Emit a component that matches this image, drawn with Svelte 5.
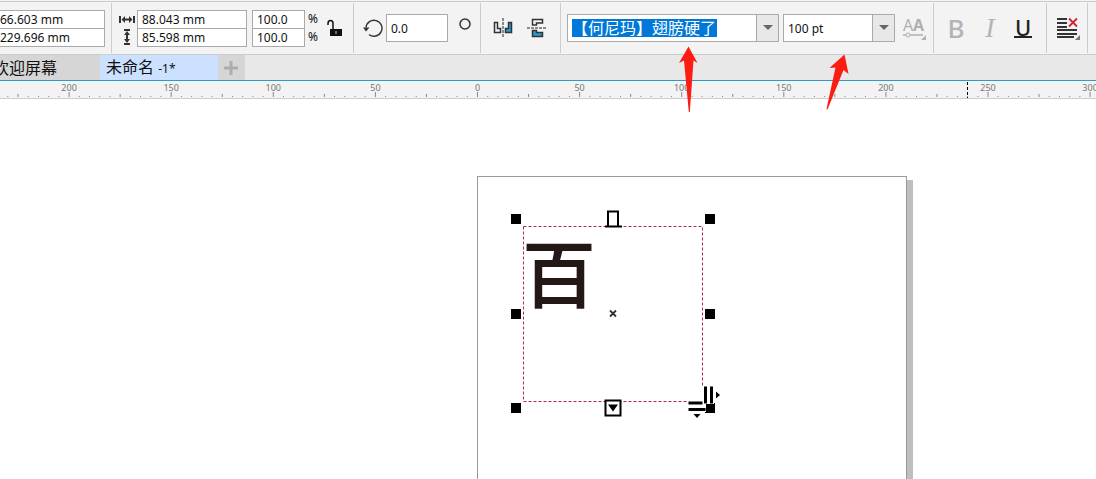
<script>
    let posX = "66.603 mm";
    let posY = "229.696 mm";
    let width = "88.043 mm";
    let height = "85.598 mm";
    let scaleX = "100.0";
    let scaleY = "100.0";
    let angle = "0.0";
    let fontName = "【何尼玛】翅膀硬了";
    let fontSize = "100 pt";

    // ruler: origin and pixels per 5mm
    const origin = 477.5;
    const step = 10.21;
    const ticks = [];
    for (let i = -50; i <= 150; i++) {
        ticks.push({
            x: origin + i * step,
            size: i % 10 == 0 ? 5 : i % 5 == 0 ? 3 : 1,
            label: i % 10 == 0 ? Math.abs(i * 5) : null
        });
    }

    const handles = [
        [511, 214], [705, 214],
        [511, 309], [705, 309],
        [511, 403], [705, 403]
    ];
</script>

<div class="app">
    <header class="toolbar">
        <div class="group position">
            <div class="pair">
                <input aria-label="X" bind:value={posX} />
                <input aria-label="Y" bind:value={posY} />
            </div>
        </div>

        <div class="group size">
            <div class="pair icons">
                <svg width="16" height="18" viewBox="0 0 16 18" stroke="#333" fill="#333">
                    <path d="M1 6v7M15 6v7" stroke-width="2" />
                    <path d="M4 9.5h8" stroke-width="2" />
                    <path d="M2.5 9.5l3.500-3.500v7zM13.5 9.5l-3.500-3.500v7z" stroke="none" />
                </svg>
                <svg width="16" height="18" viewBox="0 0 16 18" stroke="#333" fill="#333">
                    <path d="M5 2h6M5 16h6" stroke-width="2" />
                    <path d="M8 5v8" stroke-width="2" />
                    <path d="M8 3l-3 4h6zM8 15l-3-4h6z" stroke="none" />
                </svg>
            </div>
            <div class="pair">
                <input aria-label="宽度" bind:value={width} />
                <input aria-label="高度" bind:value={height} />
            </div>
            <div class="pair scale">
                <input aria-label="水平缩放" bind:value={scaleX} />
                <input aria-label="垂直缩放" bind:value={scaleY} />
            </div>
            <div class="pair percent">
                <span>%</span>
                <span>%</span>
            </div>
            <button class="lock" aria-label="锁定比率">
                <svg width="16" height="18" viewBox="0 0 16 18">
                    <path d="M1 6V4.500Q1 1.500 3.500 1.500T6 4.500V11" fill="none" stroke="#111" stroke-width="1.500" />
                    <rect x="3" y="10" width="12" height="7" fill="#111" />
                    <path d="M9 12v3" stroke="#ccc" />
                </svg>
            </button>
        </div>

        <div class="group rotate">
            <svg width="20" height="20" viewBox="0 0 20 20">
                <path d="M3 9.500A8 8 0 1 1 6 16.500" fill="none" stroke="#333" stroke-width="1.400" />
                <path d="M0 9.500h6.500L3 13.500z" fill="#333" />
            </svg>
            <input aria-label="旋转角度" bind:value={angle} />
            <svg class="degree" width="12" height="12" viewBox="0 0 12 12">
                <circle cx="6" cy="6" r="5" fill="none" stroke="#333" stroke-width="1.500" />
            </svg>
        </div>

        <div class="group mirror">
            <button aria-label="水平镜像">
                <svg width="20" height="20" viewBox="0 0 20 20" stroke="#333" stroke-width="1.500">
                    <path d="M1.500 4.500h3v6h3v4h-6z" fill="none" />
                    <path d="M18.500 4.500h-3v6h-3v4h6z" fill="#259bd0" />
                    <path d="M10 0v20" stroke="#222" stroke-width="1" stroke-dasharray="3 1" />
                </svg>
            </button>
            <button aria-label="垂直镜像">
                <svg width="20" height="20" viewBox="0 0 20 20" stroke="#333" stroke-width="1.500">
                    <path d="M5.500 7V1.500h10v3.500h-6V7z" fill="none" />
                    <path d="M5.500 12.500V18.500h10v-4h-6v-2z" fill="#259bd0" />
                    <path d="M0 10h20" stroke="#222" stroke-width="1" stroke-dasharray="3 1" />
                </svg>
            </button>
        </div>

        <div class="group font">
            <div class="combo family">
                <input class="marked" aria-label="字体" bind:value={fontName} />
                <button aria-label="字体列表">
                    <svg width="10" height="6" viewBox="0 0 10 6"><path d="M0 0h10L5 5z" fill="#666" /></svg>
                </button>
            </div>
            <div class="combo points">
                <input aria-label="字体大小" bind:value={fontSize} />
                <button aria-label="大小列表">
                    <svg width="10" height="6" viewBox="0 0 10 6"><path d="M0 0h10L5 5z" fill="#666" /></svg>
                </button>
            </div>
            <button class="variable" aria-label="可变字体">
                <svg width="26" height="28" viewBox="-1 -3 26 28" fill="#b0b0b0">
                    <text x="0" y="14" font-size="16">A</text>
                    <text x="10" y="14" font-size="16" font-weight="bold">A</text>
                    <path d="M0 18h20" stroke="#b0b0b0" stroke-width="1.500" />
                    <circle cx="5" cy="18" r="2" fill="#f3f3f3" stroke="#b0b0b0" />
                    <path d="M23 18v5h-5z" />
                </svg>
            </button>
        </div>

        <div class="group style">
            <button class="bold">B</button>
            <button class="italic">I</button>
            <button class="underline">U</button>
        </div>

        <div class="group align">
            <button aria-label="文本对齐">
                <svg width="24" height="24" viewBox="0 0 24 24">
                    <path d="M0 3h10M0 7h10M0 11h10M0 14h20M0 18h20M0 21h17" stroke="#333" stroke-width="1.800" />
                    <path d="M12 2.500l8 8M20 2.500l-8 8" stroke="#d32232" stroke-width="1.800" />
                    <path d="M23 19v5h-5z" fill="#777" />
                </svg>
            </button>
        </div>
    </header>

    <nav class="tabs">
        <button class="tab welcome">欢迎屏幕</button>
        <button class="tab active">未命名 <small>-1*</small></button>
        <button class="tab add" aria-label="新建">
            <svg width="14" height="14" viewBox="0 0 14 14">
                <path d="M7 0v14M0 7h14" stroke="#adadad" stroke-width="3" />
            </svg>
        </button>
    </nav>

    <svg class="ruler" height="17">
        {#each ticks as tick}
            <path d="M{tick.x} 16v-{tick.size}" stroke="#888" />
            {#if tick.label !== null}
                <text x={tick.x} y="10" text-anchor="middle">{tick.label}</text>
            {/if}
        {/each}
        <path d="M967.500 1v16" stroke="#000" stroke-dasharray="3 2" />
    </svg>

    <main class="canvas">
        <div class="page">
            <svg class="selection" width="225" height="220" viewBox="500 205 225 220">
                <text class="glyph" x="523" y="301">百</text>
                <rect x="523.500" y="226.500" width="179" height="175" fill="none" stroke="#b02a45" stroke-dasharray="3 2" />
                {#each handles as [x, y]}
                    <rect {x} {y} width="10" height="10" />
                {/each}
                <path d="M610 316.500l6-6M610 310.500l6 6" stroke="#333" stroke-width="1.800" />

                <path d="M608 226V211.500h10V226" fill="#fff" stroke="#000" stroke-width="2" />
                <path d="M605 226.500h17" stroke="#000" stroke-width="2" />

                <rect x="605.500" y="400.500" width="15" height="15" fill="#fff" stroke="#000" stroke-width="2" />
                <path d="M608 404.500h10l-5 7z" />

                <path d="M688 400h18v12h-18zM702 386h12v18h-12z" fill="#fff" />
                <path d="M707 405h8v8h-8z" />
                <path d="M688.500 403h14M688.500 409.500h17M705.500 386.500v17M711.500 386.500v17" stroke="#000" stroke-width="3" />
                <path d="M716 391.500v7l4-3.500zM693.500 414h7l-3.500 4z" />
            </svg>
        </div>
    </main>

    <svg class="pointer first" width="20" height="66" viewBox="678 46 20 66">
        <path d="M688.500 46.500L697.500 63L693.500 60.500L689.800 112H688.800L684 60.500L679 63z" />
    </svg>
    <svg class="pointer second" width="24" height="56" viewBox="825 54 24 56">
        <path d="M844.500 54.500L848.500 74L843.500 70L827.500 109.500L826.500 109L835.500 67.500L829.500 68z" />
    </svg>
</div>

<style>
    :global(body) {
        margin: 0;
    }

    .app {
        position: relative;
        display: flex;
        flex-direction: column;
        height: 100vh;
        overflow: hidden;
        background: #f3f3f3;
        color: #111;
        font-family: "Noto Sans", "Noto Sans CJK SC", sans-serif;
        font-size: 12px;
    }

    button, input {
        box-sizing: border-box;
        margin: 0;
        padding: 0;
        border: none;
        border-radius: 0;
        background: none;
        color: inherit;
        font: inherit;
        outline: none;
    }

    svg {
        display: block;
        flex: none;
    }

    .toolbar {
        display: flex;
        flex: none;
        box-sizing: border-box;
        height: 54px;
        margin-top: 1px;
        border-top: 1px solid #ccc;
        border-bottom: 1px solid #ccc;
    }

    .group {
        display: flex;
        align-items: center;
        flex: none;
        box-sizing: border-box;
        margin: 1px 0;
        border-right: 1px solid #ccc;
    }

    .pair {
        display: flex;
        flex-direction: column;
    }

    .pair input {
        width: 110px;
        height: 19px;
        padding-left: 4px;
        border: 1px solid #aaa;
        background: #fff;
    }

    .pair input + input {
        margin-top: -1px;
    }

    .position {
        width: 112px;
    }

    .position .pair input {
        width: 105px;
        padding-left: 0;
        border-left: none;
    }

    .size {
        width: 242px;
        padding-left: 7px;
    }

    .icons {
        margin-right: 2px;
    }

    .pair.scale input {
        width: 53px;
        margin-left: 5px;
    }

    .percent {
        margin-left: 3px;
        line-height: 18px;
    }

    .lock {
        margin-left: 9px;
    }

    .rotate {
        width: 127px;
        padding-left: 9px;
    }

    .rotate input {
        width: 62px;
        height: 28px;
        margin-left: 3px;
        padding-left: 4px;
        border: 1px solid #aaa;
        background: #fff;
    }

    .degree {
        margin: 0 0 8px 11px;
    }

    .mirror {
        gap: 14px;
        width: 80px;
        padding-left: 12px;
    }

    .font {
        width: 373px;
        padding-left: 6px;
    }

    .combo {
        display: flex;
        align-items: center;
        box-sizing: border-box;
        height: 28px;
        margin-right: 4px;
        border: 1px solid #aaa;
        background: #fff;
    }

    .combo button {
        display: flex;
        align-items: center;
        justify-content: center;
        width: 22px;
        height: 26px;
        margin-left: auto;
        border-left: 1px solid #aaa;
        background: #e8e8e8;
    }

    .family {
        width: 212px;
    }

    .points {
        width: 112px;
    }

    .points input {
        width: 80px;
        padding-left: 4px;
    }

    .marked {
        width: 145px;
        height: 18px;
        margin-left: 4px;
        background: #0078d7;
        color: #fff;
        font-size: 16px;
        line-height: 18px;
    }

    .variable {
        margin-left: 3px;
    }

    .style {
        gap: 10px;
        width: 113px;
        padding-left: 10px;
    }

    .style button {
        width: 24px;
        height: 30px;
        font-size: 26px;
        line-height: 28px;
    }

    .bold, .italic {
        color: #b4b4b4;
    }

    .style .bold {
        font-weight: 500;
    }

    .style .italic {
        font-family: "Liberation Serif", serif;
        font-size: 28px;
        font-style: italic;
    }

    .style .underline {
        width: 18px;
        height: 20px;
        margin-left: 2px;
        border-bottom: 2px solid #222;
        color: #222;
        font-size: 22px;
        font-weight: 500;
        line-height: 17px;
    }

    .align {
        width: 41px;
        padding-left: 10px;
    }

    .tabs {
        display: flex;
        flex: none;
        height: 25px;
        border-bottom: 1px solid #2c9cc4;
        background: #e8e8e8;
    }

    .tab {
        background: #d6d6d6;
        font-size: 16px;
        line-height: 24px;
        text-align: left;
        white-space: nowrap;
    }

    .tab small {
        font-size: 12px;
    }

    .welcome {
        width: 107px;
        margin-left: -7px;
    }

    .active {
        width: 118px;
        padding-left: 6px;
        background: #cce0ff;
    }

    .add {
        width: 27px;
        padding-left: 6px;
    }

    .ruler {
        width: 100%;
        border-bottom: 1px solid #ccc;
        fill: #777;
        font-size: 9px;
    }

    .canvas {
        position: relative;
        flex: 1;
        overflow: hidden;
        background: #fff;
    }

    .page {
        position: absolute;
        left: 477px;
        top: 77px;
        width: 428px;
        height: 607px;
        border: 1px solid #999;
        background: #fff;
    }

    .page::after {
        content: "";
        position: absolute;
        left: 429px;
        top: 3px;
        width: 6px;
        height: 100%;
        background: #bfbfbf;
    }

    .selection {
        position: absolute;
        left: 22px;
        top: 28px;
    }

    .glyph {
        fill: #231815;
        stroke: #231815;
        stroke-width: 2px;
        font-family: "Noto Sans CJK SC", sans-serif;
        font-size: 72px;
        font-weight: 400;
    }

    .pointer {
        position: absolute;
        fill: #fb1c12;
    }

    .first {
        left: 678px;
        top: 46px;
    }

    .second {
        left: 825px;
        top: 54px;
    }
</style>
